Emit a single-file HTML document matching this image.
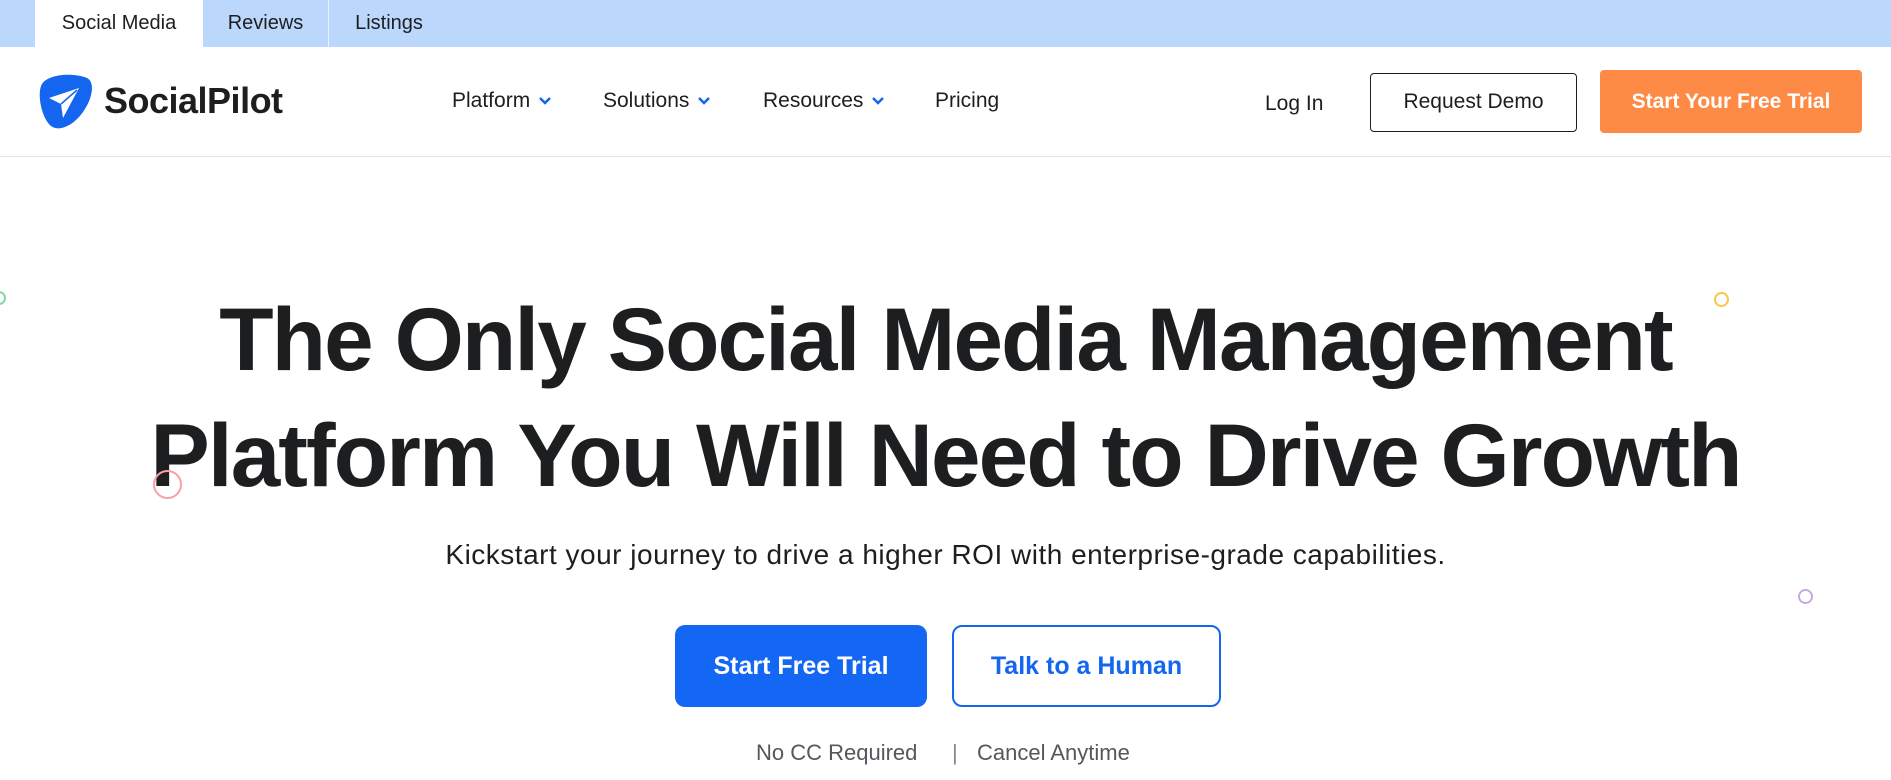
<!DOCTYPE html>
<html><head><meta charset="utf-8"><style>
*{margin:0;padding:0;box-sizing:border-box}
body{width:1891px;height:780px;overflow:hidden;background:#fff;font-family:"Liberation Sans",sans-serif;color:#1d1e20;position:relative}
.top{position:absolute;left:0;top:0;width:1891px;height:47px;background:#bcd7fc}
.tab{position:absolute;top:0;height:47px;line-height:46px;font-size:20px;color:#1d1e20;text-align:center}
.nav{position:absolute;top:47px;left:0;width:1891px;height:110px;border-bottom:1px solid #e4e4e4}
.ni{position:absolute;top:89px;font-size:21px;color:#1d1e20}
.ni svg{margin-left:8px;vertical-align:2px}
.abs{position:absolute}
h1{position:absolute;left:0;width:1891px;text-align:center;font-size:89px;font-weight:bold;letter-spacing:-1.9px;color:#1d1e20;line-height:116px;top:281px}
.circ{position:absolute;border-radius:50%;border:2px solid}
</style></head><body>
<div class="top"></div>
<div class="tab" style="left:35px;width:168px;background:#fff">Social Media</div>
<div class="tab" style="left:203px;width:126px;border-right:1px solid #e8f0fc">Reviews</div>
<div class="tab" style="left:330px;width:118px">Listings</div>
<div class="nav"></div>
<svg class="abs" style="left:33px;top:70px" width="62" height="62" viewBox="0 0 62 62">
<path d="M8 16 C12 4 40 2 54 8 C62 12 60 28 50 42 C40 56 26 62 18 56 C10 50 4 28 8 16Z" fill="#1466f0"/>
<path d="M16 28 L46 18 L30 48 L28 34 Z" fill="#fff"/>
<path d="M28 34 L44 20" stroke="#1466f0" stroke-width="1.5"/>
</svg>
<div class="abs" style="left:104px;top:80px;font-size:36px;font-weight:bold;color:#1d1e20;letter-spacing:-0.5px">SocialPilot</div>
<div class="ni" style="left:452px">Platform<svg width="14" height="9" viewBox="0 0 14 9"><path d="M2 2 L7 7 L12 2" stroke="#1466f0" stroke-width="2.5" fill="none"/></svg></div>
<div class="ni" style="left:603px">Solutions<svg width="14" height="9" viewBox="0 0 14 9"><path d="M2 2 L7 7 L12 2" stroke="#1466f0" stroke-width="2.5" fill="none"/></svg></div>
<div class="ni" style="left:763px">Resources<svg width="14" height="9" viewBox="0 0 14 9"><path d="M2 2 L7 7 L12 2" stroke="#1466f0" stroke-width="2.5" fill="none"/></svg></div>
<div class="ni" style="left:935px">Pricing</div>
<div class="ni" style="left:1265px;top:92px">Log In</div>
<div class="abs" style="left:1370px;top:73px;width:207px;height:59px;border:1.5px solid #1d1e20;border-radius:4px;font-size:21px;text-align:center;line-height:56px">Request Demo</div>
<div class="abs" style="left:1600px;top:70px;width:262px;height:63px;background:#fd8a45;border-radius:4px;font-size:21px;font-weight:bold;color:#fff;text-align:center;line-height:63px">Start Your Free Trial</div>
<h1>The Only Social Media Management<br>Platform You Will Need to Drive Growth</h1>
<div class="abs" style="left:0;width:1891px;top:539px;text-align:center;font-size:28px;letter-spacing:0.5px;color:#1d1e20">Kickstart your journey to drive a higher ROI with enterprise-grade capabilities.</div>
<div class="abs" style="left:675px;top:625px;width:252px;height:82px;background:#1466f5;border-radius:10px;color:#fff;font-size:25px;font-weight:bold;text-align:center;line-height:82px">Start Free Trial</div>
<div class="abs" style="left:952px;top:625px;width:269px;height:82px;border:2px solid #1466f0;border-radius:10px;color:#1466f0;font-size:25px;font-weight:bold;text-align:center;line-height:78px">Talk to a Human</div>
<div class="abs" style="left:756px;top:740px;font-size:22px;color:#55575c">No CC Required</div>
<div class="abs" style="left:952px;top:740px;font-size:22px;color:#888">|</div>
<div class="abs" style="left:977px;top:740px;font-size:22px;color:#55575c">Cancel Anytime</div>
<div class="circ" style="left:-8px;top:291px;width:14px;height:14px;border-color:#7fd6a8"></div>
<div class="circ" style="left:1714px;top:292px;width:15px;height:15px;border-color:#f8c64a"></div>
<div class="circ" style="left:153px;top:470px;width:29px;height:29px;border-color:#f7a0a6"></div>
<div class="circ" style="left:1798px;top:589px;width:15px;height:15px;border-color:#c5a9e0"></div>
</body></html>
